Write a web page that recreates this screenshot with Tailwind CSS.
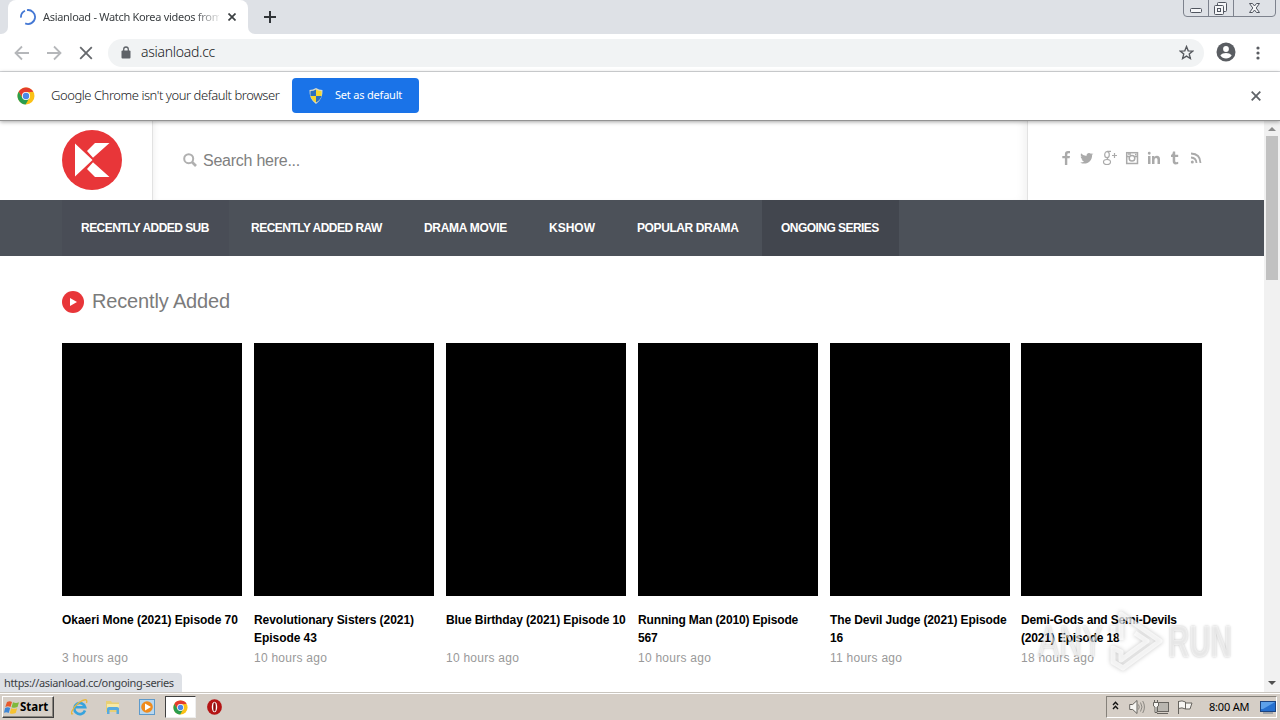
<!DOCTYPE html>
<html lang="en">
<head>
<meta charset="utf-8">
<title>Asianload</title>
<script src="https://cdn.jsdelivr.net/npm/@tailwindcss/browser@4"></script>
</head>
<body class="w-[1280px] h-[720px] overflow-hidden bg-white font-['Liberation_Sans',Arial,sans-serif]">
<svg class="hidden">
  <symbol id="chrome" viewBox="0 0 18 18">
    <circle cx="9" cy="9" r="8.5" fill="#fbc116"/>
    <path d="M1.64 4.75A8.5 8.5 0 0 1 16.36 4.75L9 5.2L5.5 11z" fill="#e33b2e"/>
    <path d="M1.64 4.75A8.5 8.5 0 0 0 8.6 17.5L12.2 11.2L5.5 11z" fill="#2a9d4e"/>
    <circle cx="9" cy="9" r="4.1" fill="#fff"/><circle cx="9" cy="9" r="3.2" fill="#4a88e8"/>
  </symbol>
</svg>
<div class="w-[1280px] h-[720px] flex flex-col">
  <!-- tab strip -->
  <header class="h-[34px] shrink-0 bg-[#dee1e6] flex items-start text-[#3c4043] font-['Noto_Sans',sans-serif]">
    <div class="w-[8px] h-[34px] bg-white"><div class="w-[8px] h-[34px] bg-[#dee1e6] rounded-br-[7px]"></div></div>
    <div class="w-[240px] h-[34px] bg-white rounded-t-[8px] flex items-center pl-[12px]">
      <svg class="w-[16px] h-[16px]" viewBox="0 0 16 16" fill="none" stroke="#4377d4" stroke-width="1.800"><path d="M1 8.600A7 7 0 0 1 5 1.700M7 1.100A7 7 0 1 1 5.200 14.400"/></svg>
      <div class="ml-[7px] w-[176px] overflow-hidden whitespace-nowrap text-[11px] tracking-[-0.3px] [mask-image:linear-gradient(to_right,black_150px,transparent_180px)]">Asianload - Watch Korea videos from</div>
      <svg class="ml-[9px] w-[8px] h-[8px]" viewBox="0 0 8 8" stroke="#3c4043" stroke-width="1.7"><path d="M.5.5l7 7M7.500.5l-7 7"/></svg>
    </div>
    <div class="w-[8px] h-[34px] bg-white"><div class="w-[8px] h-[34px] bg-[#dee1e6] rounded-bl-[7px]"></div></div>
    <svg class="ml-[8px] mt-[11px] w-[12px] h-[12px]" viewBox="0 0 12 12" stroke="#303438" stroke-width="2"><path d="M0 6h12M6 0v12"/></svg>
    <svg class="ml-auto mr-[4px] w-[93px] h-[17px]" viewBox="0 0 93 17" fill="none" stroke="#7d828d" stroke-width="1">
      <path d="M.5 0v13q0 3.500 3.500 3.500h85q3.500 0 3.500-3.500V0M25.500 0v16M50.500 0v16"/>
      <g stroke="#50555f" fill="#f5f6f8"><rect x="7.500" y="8.500" width="11" height="4" rx="1"/><rect x="34.500" y="2.500" width="9" height="9" rx="1"/><rect x="31.500" y="5.500" width="9" height="9" rx="1"/><rect x="34.500" y="8.500" width="3" height="3"/>
      <path d="M66.500 3.500h3l2 2.500 2-2.500h3l-3.300 4.500 3.300 4.500h-3l-2-2.500-2 2.500h-3l3.300-4.500z"/></g>
    </svg>
  </header>
  <!-- toolbar -->
  <div class="h-[38px] shrink-0 border-b border-[#d8dadd] flex items-center">
    <svg class="ml-[14px] w-[80px] h-[16px]" viewBox="0 0 80 16" fill="none" stroke="#b5b7ba" stroke-width="1.800"><path d="M15 8H2M8 1.500L1.500 8 8 14.500M33 8h13M40 1.500L46.500 8 40 14.500"/><path stroke="#65686c" d="M66.200 2.200l11.600 11.600M77.800 2.200L66.200 13.800"/></svg>
    <div class="ml-[14px] w-[1096px] h-[28px] rounded-full bg-[#f1f3f4] flex items-center">
      <svg class="ml-[13px] mb-[1px] w-[10px] h-[13px]" viewBox="0 0 10 13"><rect x=".5" y="4.500" width="9" height="8" rx="1" fill="#5f6368"/><path d="M2.700 5V3.300a2.300 2.300 0 0 1 4.600 0V5" fill="none" stroke="#5f6368" stroke-width="1.300"/></svg>
      <span class="ml-[10px] mb-[2px] text-[14px] leading-[20px] text-[#202124] font-light font-['Noto_Sans',sans-serif] tracking-[-0.28px]">asianload.cc</span>
      <svg class="ml-auto mr-[10px] mb-[1px] w-[15px] h-[15px]" viewBox="0 0 24 24" fill="none" stroke="#56595e" stroke-width="2.200"><path d="M12 2.500l2.700 6.800 7.300.5-5.600 4.700 1.800 7.100-6.200-3.900-6.200 3.900 1.800-7.100L2 9.800l7.300-.5z"/></svg>
    </div>
    <svg class="ml-[12px] mb-[1px] w-[20px] h-[20px]" viewBox="0 0 20 20"><circle cx="10" cy="10" r="9.500" fill="#5a5d62"/><circle cx="10" cy="7" r="2.900" fill="#fff"/><path d="M4.300 13.300q2-2.200 5.700-2.200t5.700 2.200Q13.600 16.600 10 16.600t-5.700-3.300z" fill="#fff"/></svg>
    <svg class="ml-[20px] w-[4px] h-[14px]" viewBox="0 0 4 14" fill="#5a5d62"><circle cx="2" cy="2" r="1.600"/><circle cx="2" cy="7" r="1.600"/><circle cx="2" cy="12" r="1.600"/></svg>
  </div>
  <!-- default browser bar -->
  <div class="relative h-[49px] shrink-0 border-b border-[#939393] shadow-[0_1px_4px_rgba(0,0,0,0.35)] bg-white flex items-center font-['Noto_Sans',sans-serif]">
    <svg class="ml-[17px] w-[18px] h-[18px]"><use href="#chrome"/></svg>
    <span class="ml-[16px] mb-[2px] w-[241px] whitespace-nowrap text-[13px] leading-[18px] font-light text-[#202124] tracking-[-0.45px]">Google Chrome isn't your default browser</span>
    <div class="mb-[1px] w-[127px] h-[35px] rounded-[4px] bg-[#1a73e8] flex items-center">
      <svg class="ml-[17px] w-[14px] h-[16px]" viewBox="0 0 14 16"><path d="M7 0Q10 2 13.500 2 14 11 7 16 0 11 .5 2 4 2 7 0z" fill="#d9dccb"/><path d="M7 1.500V8H1.500Q1.300 5 1.600 3 4.500 3 7 1.500zM7 8h5.500Q11.300 12 7 14.500z" fill="#2a6fc0"/><path d="M7 1.500V8h5.500q.2-3-.1-5Q9.500 3 7 1.500zM7 8H1.500Q2.700 12 7 14.500z" fill="#f4d630"/></svg>
      <span class="ml-[12px] whitespace-nowrap text-[11px] text-white tracking-[-0.2px]">Set as default</span>
    </div>
    <svg class="ml-auto mr-[19px] w-[10px] h-[10px]" viewBox="0 0 10 10" stroke="#5f6368" stroke-width="1.800"><path d="M.7.7l8.600 8.600M9.300.7L.7 9.300"/></svg>
  </div>
  <!-- page -->
  <div class="flex h-[571px] shrink-0">
    <main class="w-[1264px] overflow-hidden">
      <div class="h-[79px] pl-[62px] flex">
        <div class="w-[91px] border-r border-[#e2e2e2] pt-[9px]">
          <svg class="w-[60px] h-[60px]" viewBox="0 0 60 60"><circle cx="30" cy="30" r="30" fill="#e83639"/><path d="M13 13.500L30.500 30 13 46.500zM25 21L33 13h14.500L31 27.800zM31 32.200L47.500 47H33l-8-8z" fill="#fff"/></svg>
        </div>
        <div class="w-[875px] border-r border-[#e2e2e2] flex items-center pl-[30px] shadow-[inset_5px_0_5px_-3px_#f3f3f3,inset_-8px_0_8px_-4px_#f3f3f3]">
          <svg class="mb-[1px] w-[14px] h-[14px]" viewBox="0 0 14 14" fill="none" stroke="#b0b0b0" stroke-width="2"><circle cx="5.700" cy="5.700" r="4.500"/><path d="M9 9l4 4" stroke-width="2.600"/></svg>
          <span class="ml-[6px] text-[16px] text-[#808080] tracking-[-0.25px]">Search here...</span>
        </div>
        <svg class="ml-[34px] mt-[29px] w-[142px] h-[16px]" viewBox="0 0 142 16" fill="#aaa">
          <path d="M8 1.100v2.200H6.500Q5.300 3.300 5.300 4.500V6H8l-.4 2.200H5.300V15H2.900V8.200H.3V6h2.600V4.200Q2.900 1 6 1z"/>
          <path d="M31.500 3.600q-.6.900-1.400 1.400c.2 5.200-3.600 8.600-7.700 8.600-1.700 0-3-.4-4.200-1.200 1.500.1 2.800-.3 3.900-1.200q-1.900-.1-2.500-1.900h1.100q-2-.6-2.100-2.700l1.100.3Q18 5.400 19 3.300q2.300 2.700 5.500 2.800c-.5-2.600 2.500-4.200 4.500-2.300l1.700-.6-1.200 1.500z"/>
          <g fill="none" stroke="#aaa" stroke-width="1.200"><ellipse cx="45" cy="4.700" rx="2.300" ry="3"/><ellipse cx="45" cy="12" rx="3.500" ry="2.500"/><path d="M49 1.300h-4M46 7.500q-1.500 1.300.4 2.200M50 5.500h5M52.500 3v5"/></g>
          <g fill="none" stroke="#aaa" stroke-width="1.500"><rect x="64.700" y="2.700" width="10.800" height="10.800"/><circle cx="70" cy="8.300" r="2.800"/><path d="M65 6.500h2.500M72.500 6.500H75M66 4h3M73 4.500h1.500" /></g>
          <path d="M86 6h2.500v8H86zM85.800 3.200a1.400 1.400 0 1 0 2.900 0 1.400 1.400 0 1 0-2.900 0zM90 6h2.400v1.200q.9-1.400 2.600-1.400 3 0 3 3.500V14h-2.500V9.700q0-1.700-1.400-1.700-1.600 0-1.600 1.900V14H90z"/>
          <path d="M111 1.500h2.200v3.200h3v2.200h-3v4q0 1.300 1.300 1.300l1.700-.4v2.200q-5.500 1.600-5.500-2.700V6.900H109V5q1.800-.5 2-3.500z"/>
          <g fill="none" stroke="#aaa" stroke-width="1.800"><path d="M129 7.500q5.200.3 5.500 5.500M129 3.500q9.300.3 9.500 9.500"/></g><circle cx="130.300" cy="12" r="1.500"/>
        </svg>
      </div>
      <nav class="h-[56px] bg-[#4c5159] pl-[62px] flex items-center text-white text-[12px] font-bold whitespace-nowrap">
        <div class="w-[167px] h-full bg-[#494d56] pl-[19px] flex items-center tracking-[-0.54px]">RECENTLY ADDED SUB</div>
        <div class="w-[173px] pl-[22px] tracking-[-0.52px]">RECENTLY ADDED RAW</div>
        <div class="w-[125px] pl-[22px] tracking-[-0.3px]">DRAMA MOVIE</div>
        <div class="w-[88px] pl-[22px]">KSHOW</div>
        <div class="w-[147px] pl-[22px] tracking-[-0.4px]">POPULAR DRAMA</div>
        <div class="w-[137px] h-full bg-[#42464e] pl-[19px] flex items-center tracking-[-0.54px]">ONGOING SERIES</div>
      </nav>
      <h1 class="mt-[34px] ml-[62px] h-[22px] flex items-center text-[20px] text-[#7b7b7b] tracking-[-0.15px]">
        <svg class="w-[22px] h-[22px] mt-[2px] mr-[8px]" viewBox="0 0 22 22"><circle cx="11" cy="11" r="11" fill="#e83639"/><path d="M8 7l7 4-7 4z" fill="#fff"/></svg>Recently Added
      </h1>
      <div class="mt-[31px] ml-[62px] w-[1140px] flex gap-[12px] text-[12px] leading-[18px] font-bold text-black">
        <div class="w-[180px] shrink-0"><div class="h-[253px] bg-black"></div><div class="mt-[15px] h-[38px] whitespace-nowrap tracking-[-0.03px]">Okaeri Mone (2021) Episode 70</div><div class="font-normal text-[#999] tracking-[0.25px]">3 hours ago</div></div>
        <div class="w-[180px] shrink-0"><div class="h-[253px] bg-black"></div><div class="mt-[15px] h-[38px] whitespace-nowrap tracking-[-0.05px]">Revolutionary Sisters (2021)<br>Episode 43</div><div class="font-normal text-[#999] tracking-[0.25px]">10 hours ago</div></div>
        <div class="w-[180px] shrink-0"><div class="h-[253px] bg-black"></div><div class="mt-[15px] h-[38px] whitespace-nowrap tracking-[-0.1px]">Blue Birthday (2021) Episode 10</div><div class="font-normal text-[#999] tracking-[0.25px]">10 hours ago</div></div>
        <div class="w-[180px] shrink-0"><div class="h-[253px] bg-black"></div><div class="mt-[15px] h-[38px] whitespace-nowrap tracking-[-0.15px]">Running Man (2010) Episode<br>567</div><div class="font-normal text-[#999] tracking-[0.25px]">10 hours ago</div></div>
        <div class="w-[180px] shrink-0"><div class="h-[253px] bg-black"></div><div class="mt-[15px] h-[38px] whitespace-nowrap tracking-[-0.12px]">The Devil Judge (2021) Episode<br>16</div><div class="font-normal text-[#999] tracking-[0.25px]">11 hours ago</div></div>
        <div class="w-[181px] shrink-0 -ml-[1px]"><div class="h-[253px] bg-black"></div><div class="mt-[15px] h-[38px] whitespace-nowrap tracking-[-0.17px]">Demi-Gods and Semi-Devils<br>(2021) Episode 18</div><div class="font-normal text-[#999] tracking-[0.25px]">18 hours ago</div></div>
      </div>
    </main>
    <div class="w-[16px] bg-[#f1f1f1] flex flex-col items-center">
      <svg class="w-[8px] h-[4px] mt-[6px]" viewBox="0 0 8 4"><path d="M0 4l4-4 4 4z" fill="#8b8b8b"/></svg>
      <div class="mt-[5px] w-[12px] h-[144px] bg-[#c1c1c1]"></div>
      <svg class="w-[8px] h-[4px] mt-auto mb-[7px]" viewBox="0 0 8 4"><path d="M0 0l4 4 4-4z" fill="#505050"/></svg>
    </div>
  </div>
  <!-- taskbar -->
  <footer class="relative h-[28px] shrink-0 bg-[#d5cec6] border-t border-[#c9c5be] shadow-[inset_0_1px_0_#fff] flex items-center font-['Noto_Sans',sans-serif] text-black">
    <div class="ml-[2px] mt-[1px] w-[52px] h-[22px] border border-t-white border-l-white border-b-[#404040] border-r-[#404040] shadow-[inset_-1px_-1px_0_#8a867f] flex items-center">
      <svg class="ml-[1px] w-[16px] h-[15px]" viewBox="0 0 16 15"><path d="M3 2q3-1.500 5 0L6.500 7q-2.500-1.500-5.200 0z" fill="#e8592b"/><path d="M9 2.300q3 1.400 6 0L13.500 7q-3 1.400-6 .2z" fill="#7fb93c"/><path d="M1.100 8q2.700-1.500 5.100 0L4.700 13Q2.500 11.500 0 12.700z" fill="#3f87d6"/><path d="M7.200 8.200q3 1.300 6 0L11.700 13q-3 1.500-6 .2z" fill="#f6c231"/></svg>
      <span class="text-[11.500px] font-bold">Start</span>
    </div>
    <svg class="ml-[17px] w-[17px] h-[18px]" viewBox="0 0 17 18" fill="none"><path d="M14 12.500A5.500 5.500 0 1 1 14.200 9.300H4.500" stroke="#37a3dd" stroke-width="2.600"/><path d="M2 15.500C-1.500 18 1 10 8 4.500 13 1 17 .5 15.500 5" stroke="#e8b73a" stroke-width="1.300"/></svg>
    <svg class="ml-[17px] w-[16px] h-[16px]" viewBox="0 0 16 16"><path d="M1 2h5l1 1.500h7V13H1z" fill="#e8cf75"/><path d="M2 5h12v6H2z" fill="#f6e9a6"/><path d="M2 15V9.500Q2 8 4 8h8q2 0 2 1.500V15h-2.500v-4h-7v4z" fill="#56aadf"/></svg>
    <svg class="ml-[18px] w-[16px] h-[16px]" viewBox="0 0 16 16"><rect x=".5" y=".5" width="15" height="15" fill="#b8d7ef" stroke="#5d9acb"/><circle cx="8" cy="8" r="5.800" fill="#ef8b1d"/><path d="M6 4.500l6 3.500-6 3.500z" fill="#fff"/></svg>
    <div class="ml-[10px] mt-[1px] w-[31px] h-[22px] bg-white border border-t-[#404040] border-l-[#404040] border-b-[#eee] border-r-[#eee] flex items-center justify-center"><svg class="w-[15px] h-[15px]" viewBox="0 0 18 18"><use href="#chrome" width="18" height="18"/></svg></div>
    <svg class="ml-[11px] w-[15px] h-[16px]" viewBox="0 0 15 16"><ellipse cx="7.500" cy="8" rx="7.400" ry="7.800" fill="#b41414"/><ellipse cx="7.500" cy="8" rx="2.700" ry="5.300" fill="#fff"/><ellipse cx="7.500" cy="8" rx="1.300" ry="4.500" fill="#8a0c0c"/></svg>
    <div class="ml-auto mr-[3px] mt-[1px] w-[171px] h-[22px] border border-t-[#85817a] border-l-[#85817a] border-b-white border-r-white flex items-center">
      <svg class="ml-[5px] mb-[3px] w-[7px] h-[9px]" viewBox="0 0 7 9" fill="none" stroke="#111" stroke-width="1.400"><path d="M1 4l2.500-2.700L6 4M1 8l2.500-2.700L6 8"/></svg>
      <svg class="ml-[10px] w-[66px] h-[16px]" viewBox="0 0 66 16" fill="#f7f6f3" stroke="#67645f"><path d="M.7 5.500h3L8 1.500v13l-4.300-4h-3z"/><g fill="none"><path d="M9.500 5.500q1.500 2.500 0 5M11.500 3.500q3 4.500 0 9M13.700 2q3.500 6 0 12" stroke="#8b8882"/></g><rect x="28.500" y="3.500" width="11" height="9" fill="#b9b6b0"/><path d="M28 14.500h11M25.500 1v3M28.500 1v3M24.500 3.500h5v3.500l-1.500 1v5.500h-2V8l-1.500-1z" /><path d="M49.500 15V2M49.500 2.500q3.500-1.500 7 .5V10q-3.500-2-7-.5zM56.500 4h6.500l-2 6h-4.500z"/></svg>
      <span class="ml-[14px] w-[40px] whitespace-nowrap text-[11px] tracking-[-0.2px]">8:00 AM</span>
      <svg class="ml-[11px] w-[16px] h-[14px]" viewBox="0 0 16 14"><rect x=".5" y="1.500" width="15" height="10" fill="#2670cf" stroke="#1c4480"/><path d="M1 2h14L3 9H1z" fill="#5da1ea"/><path d="M3 13h10" stroke="#6d7b8c"/></svg>
    </div>
  </footer>
</div>
<!-- link status bubble -->
<div class="absolute left-0 top-[673px] w-[182px] h-[19px] bg-[#dee1e6] rounded-tr-[4px] pl-[4px] pt-[1px] flex items-center text-[11px] text-[#3c4043] whitespace-nowrap tracking-[-0.36px] font-['Noto_Sans',sans-serif]">https://asianload.cc/ongoing-series</div>
<!-- watermark over the page -->
<div class="absolute left-[1038px] top-[608px] w-[194px] h-[64px] flex items-center justify-between text-[44px] leading-none text-white/60 [text-shadow:0_0_3px_rgba(0,0,0,0.25)]">
  <span class="w-[66px]"><span class="inline-block origin-left scale-x-[0.72] pt-[3px]">ANY</span></span>
  <svg class="w-[58px] h-[64px] shrink-0 drop-shadow-[0_0_2px_rgba(0,0,0,0.3)]" viewBox="0 0 58 64" fill="none" stroke="#fff" stroke-opacity=".7" stroke-width="5" stroke-linejoin="round"><path d="M6 26V18M14 32V6l39 27L16 60 6 54V40l8 4v8l26-19-12-8"/></svg>
  <span class="w-[64px]"><span class="inline-block origin-left scale-x-[0.67] font-bold pt-[3px]">RUN</span></span>
</div>
</body>
</html>
